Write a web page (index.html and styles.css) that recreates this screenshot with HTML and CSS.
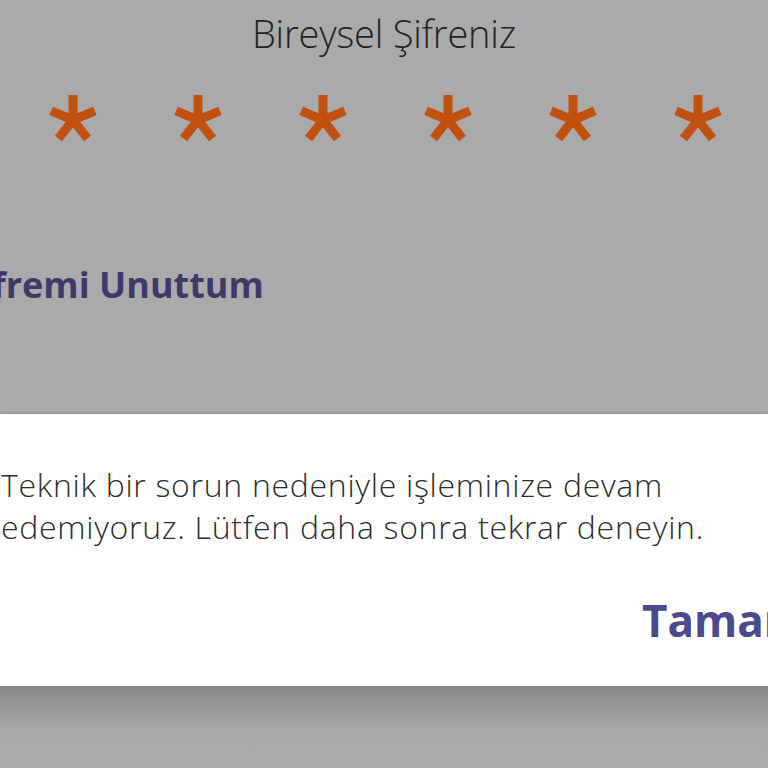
FILE: index.html
```html
<!DOCTYPE html>
<html lang="tr">
<head>
<meta charset="utf-8">
<title>Bireysel Şifreniz</title>
<link rel="stylesheet" href="styles.css">
</head>
<body>
<svg class="defs" width="0" height="0" aria-hidden="true">
  <symbol id="ast" viewBox="-25 -25 50 50">
    <g stroke="currentColor" stroke-width="9" stroke-linecap="butt">
      <line x1="0" y1="2" x2="0" y2="-23"/>
      <line x1="0" y1="2" x2="21.9" y2="-7.1"/>
      <line x1="0" y1="2" x2="14.5" y2="20.6"/>
      <line x1="0" y1="2" x2="-14.5" y2="20.6"/>
      <line x1="0" y1="2" x2="-21.9" y2="-7.1"/>
    </g>
  </symbol>
</svg>
<main class="screen">
  <h1 class="title">Bireysel Şifreniz</h1>
  <div class="pin">
    <span class="pin-dot"><svg><use href="#ast"/></svg></span>
    <span class="pin-dot"><svg><use href="#ast"/></svg></span>
    <span class="pin-dot"><svg><use href="#ast"/></svg></span>
    <span class="pin-dot"><svg><use href="#ast"/></svg></span>
    <span class="pin-dot"><svg><use href="#ast"/></svg></span>
    <span class="pin-dot"><svg><use href="#ast"/></svg></span>
  </div>
  <a class="forgot">Şifremi Unuttum</a>
</main>
<section class="dialog">
  <p class="message">Teknik bir sorun nedeniyle işleminize devam<br>edemiyoruz. Lütfen daha sonra tekrar deneyin.</p>
  <div class="actions"><button class="ok">Tamam</button></div>
</section>
<div class="below"></div>
</body>
</html>
```
FILE: styles.css
```css
html, body {
  margin: 0;
  padding: 0;
}
body {
  background: #aaaaaa;
  font-family: "Open Sans", "Liberation Sans", sans-serif;
  overflow: hidden;
  width: 768px;
  height: 768px;
}
.defs {
  position: absolute;
}
.screen {
  height: 414px;
  display: flex;
  flex-direction: column;
  overflow: hidden;
}
.title {
  margin: 0;
  padding-top: 7px;
  font-size: 38px;
  line-height: 52px;
  font-weight: 300;
  color: #232323;
  text-align: center;
  letter-spacing: -0.2px;
}
.pin {
  display: flex;
  margin-top: 34px;
  padding-left: 10px;
}
.pin-dot {
  width: 125px;
  display: flex;
  justify-content: center;
  color: #c2500f;
}
.pin-dot svg {
  width: 50px;
  height: 50px;
}
.forgot {
  display: block;
  margin-top: 118px;
  margin-left: -39px;
  font-size: 36px;
  line-height: 48px;
  font-weight: 700;
  color: #3d3a6b;
  white-space: nowrap;
}
.dialog {
  background: #ffffff;
  height: 272px;
  box-sizing: border-box;
  padding-top: 50px;
  box-shadow: 0 -1px 2px rgba(0, 0, 0, 0.18);
  overflow: hidden;
}
.message {
  margin: 0;
  padding-left: 1px;
  font-size: 32px;
  line-height: 42px;
  font-weight: 300;
  color: #2e2e2e;
  letter-spacing: 0.7px;
  white-space: nowrap;
}
.actions {
  margin-top: 44px;
  padding-left: 642px;
  white-space: nowrap;
}
.ok {
  border: 0;
  background: none;
  padding: 0;
  font-family: inherit;
  font-size: 44px;
  line-height: 56px;
  font-weight: 700;
  color: #4b4a8c;
}
.below {
  height: 82px;
  background: linear-gradient(#878787 0px, #a9a9a9 44px, #aaaaaa 82px);
}
```
